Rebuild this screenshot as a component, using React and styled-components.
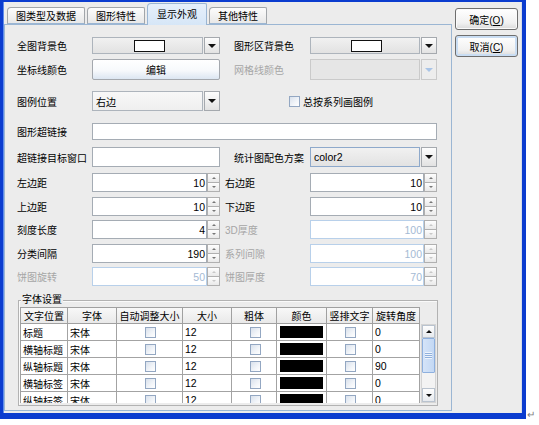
import React from "react";
import styled, { createGlobalStyle } from "styled-components";

const GlobalStyle = createGlobalStyle`
  html, body { margin: 0; padding: 0; background: #fff; }
  body {
    width: 539px; height: 425px; overflow: hidden;
    font-family: "Liberation Sans", "Noto Sans CJK SC", sans-serif;
    font-size: 10px; color: #000;
  }
  * { box-sizing: border-box; }
`;

const Page = styled.div`
  display: flex;
  width: 539px;
  height: 425px;
`;

const Window = styled.div`
  width: 526px;
  height: 419px;
  border-style: solid;
  border-color: #0B3CCF;
  border-width: 2px 4px 6px 3px;
  background: #ECECEC;
  display: flex;
  align-items: flex-start;
  box-shadow: inset 1px 0 0 #5F8CEB, inset -1px 0 0 #D6DCE8;
`;

const Pilcrow = styled.span`
  align-self: flex-end;
  margin: 0 0 5px 1px;
  color: #808080;
  font-size: 10px;
  line-height: 10px;
`;

const TabPane = styled.div`
  width: 448px;
  height: 409px;
  margin-left: 1px;
  display: flex;
  flex-direction: column;
`;

const TabStrip = styled.div`
  height: 22px;
  display: flex;
  align-items: flex-end;
  gap: 2px;
  padding-left: 3px;
  position: relative;
  z-index: 1;
`;

const Tab = styled.div`
  height: ${(p) => (p.$active ? 22 : 17)}px;
  margin-bottom: ${(p) => (p.$active ? -1 : 0)}px;
  padding: 0 ${(p) => (p.$active ? 9 : 8)}px;
  display: flex;
  align-items: center;
  padding-bottom: ${(p) => (p.$active ? 2 : 0)}px;
  border: 1px solid ${(p) => (p.$active ? "#9BB6D3" : "#A2A6AA")};
  border-bottom: ${(p) => (p.$active ? "none" : "1px solid #9BB6D3")};
  border-radius: 4px 2px 0 0;
  background: ${(p) =>
    p.$active
      ? "linear-gradient(#E6F0FB, #D6E6F7)"
      : "linear-gradient(#FCFCFC, #E8E8E8)"};
  white-space: nowrap;
`;

const Panel = styled.div`
  flex: 1;
  border: 1px solid #9BB6D3;
  background: #ECECEC;
  padding: 0 14px 0 12px;
  display: flex;
  flex-direction: column;
`;

const Row = styled.div`
  display: grid;
  grid-template-columns: 75px 128px 90px 127px;
  align-items: stretch;
  height: ${(p) => p.$h}px;
  margin-top: ${(p) => p.$mt}px;
`;

const Label = styled.div`
  display: flex;
  align-items: center;
  padding-left: ${(p) => p.$pad || 0}px;
  color: ${(p) => (p.$disabled ? "#A6A6A6" : "#000")};
  white-space: nowrap;
`;

const Wide = styled.div`
  grid-column: 2 / 5;
  display: flex;
`;

const CheckCell = styled.label`
  grid-column: 3 / 5;
  display: flex;
  align-items: center;
  gap: 3px;
  padding-left: ${(p) => p.$pad}px;
  white-space: nowrap;
`;

/* combo box */
const Combo = styled.div`
  display: flex;
  gap: 1px;
`;

const ComboField = styled.div`
  flex: 1;
  display: flex;
  align-items: center;
  justify-content: ${(p) => (p.$center ? "center" : "flex-start")};
  padding-left: 3px;
  border: 1px solid ${(p) => (p.$disabled ? "#CACACA" : p.$blue ? "#8EA9CB" : "#ADB4BC")};
  background: ${(p) =>
    p.$disabled
      ? "#E6E6E6"
      : p.$light
      ? "linear-gradient(#F8F8F8, #EFEFEF)"
      : "linear-gradient(#F1F1F1, #E2E2E2)"};
  font-size: ${(p) => (p.$latin ? 10.5 : 10)}px;
`;

const Swatch = styled.span`
  width: 31px;
  height: 12px;
  background: #fff;
  border: 1px solid #111;
`;

const ArrowButton = styled.div`
  width: 16px;
  display: flex;
  align-items: center;
  justify-content: center;
  border: 1px solid ${(p) => (p.$disabled ? "#CACACA" : "#A5A9AE")};
  background: ${(p) => (p.$disabled ? "#EDEDED" : "linear-gradient(#FDFDFD, #E2E2E2)")};
  &::after {
    content: "";
    border-left: 4px solid transparent;
    border-right: 4px solid transparent;
    border-top: 4px solid ${(p) => (p.$disabled ? "#A9C4E6" : "#111")};
  }
`;

const EditButton = styled.button`
  font: inherit;
  margin: 0;
  padding: 0;
  border: 1px solid #A4A8AE;
  border-radius: 2px;
  background: linear-gradient(#FFFFFF 0%, #F7F9FC 55%, #DCE6F2 100%);
  color: #000;
`;

const TextField = styled.div`
  flex: 1;
  background: #fff;
  border: 1px solid #A5ACB4;
  display: flex;
  align-items: center;
  padding-left: 3px;
`;

/* spinner */
const Spinner = styled.div`
  display: flex;
`;

const SpinField = styled.div`
  flex: 1;
  background: #fff;
  border: 1px solid ${(p) => (p.$disabled ? "#B8D0EA" : "#A5ACB4")};
  color: ${(p) => (p.$disabled ? "#A4BAD4" : "#000")};
  display: flex;
  align-items: center;
  justify-content: flex-end;
  padding-right: 1px;
  font-size: 10.5px;
`;

const SpinButtons = styled.div`
  width: 13px;
  display: flex;
  flex-direction: column;
`;

const SpinBtn = styled.div`
  flex: 1;
  border: 1px solid #B0B0B0;
  border-top-width: ${(p) => (p.$down ? 0 : 1)}px;
  background: linear-gradient(#FEFEFE, #E9E9E9);
  display: flex;
  align-items: center;
  justify-content: center;
  &::after {
    content: "";
    border-left: 2px solid transparent;
    border-right: 2px solid transparent;
    ${(p) => (p.$down ? "border-top" : "border-bottom")}: 2px solid ${(p) =>
      p.$disabled ? "#C8C8C8" : "#777"};
  }
`;

/* check box */
const Box = styled.span`
  display: inline-block;
  flex: none;
  width: 11px;
  height: 11px;
  border: 1px solid #93A7C2;
  background: linear-gradient(135deg, #D9E1EC 0%, #F2F5F9 60%, #FFFFFF 100%);
`;

/* group */
const Group = styled.div`
  position: relative;
  margin-top: 14px;
  margin-left: 1px;
  width: 420px;
  height: 106px;
  border: 1px solid #B2B2B2;
  padding: 6px 1px 0 1px;
  display: flex;
  align-items: flex-start;
  box-shadow: inset 1px 1px 0 #FAFAFA;
`;

const GroupTitle = styled.span`
  position: absolute;
  top: -7px;
  left: 2px;
  padding: 0 1px;
  line-height: 12px;
  background: #ECECEC;
`;

const Table = styled.div`
  width: 400px;
  border-left: 1px solid #A0A0A0;
`;

const GridRow = styled.div`
  display: grid;
  grid-template-columns: 47px 49px 66px 49px 45px 50px 46px 47px;
  height: 17px;
`;

const HeadCell = styled.div`
  border-top: 1px solid #A0A0A0;
  border-right: 1px solid #A0A0A0;
  border-bottom: 1px solid #A0A0A0;
  background: linear-gradient(#F8F8F8, #E9E9E9);
  display: flex;
  align-items: center;
  justify-content: center;
  white-space: nowrap;
`;

const BodyView = styled.div`
  height: 79px;
  overflow: hidden;
`;

const Cell = styled.div`
  border-right: 1px solid #A3A3A3;
  border-bottom: 1px solid #A3A3A3;
  background: #fff;
  display: flex;
  align-items: center;
  justify-content: ${(p) => (p.$center ? "center" : "flex-start")};
  padding: ${(p) => (p.$fill ? "2px 3px" : "0 0 0 2px")};
  white-space: nowrap;
  font-size: ${(p) => (p.$latin ? 10.5 : 10)}px;
`;

const ColorFill = styled.div`
  width: 100%;
  height: 100%;
  background: #000;
`;

const ScrollColumn = styled.div`
  margin-left: 1px;
  padding-top: 17px;
`;

const ScrollBar = styled.div`
  width: 15px;
  height: 79px;
  background: #F3F3F3;
  border: 1px solid #D4D4D4;
  display: flex;
  flex-direction: column;
`;

const ScrollBtn = styled.div`
  height: ${(p) => p.$h}px;
  background: linear-gradient(#FDFDFD, #E7EAEE);
  border: 1px solid #B9C3CF;
  display: flex;
  align-items: center;
  justify-content: center;
  &::after {
    content: "";
    border-left: 3px solid transparent;
    border-right: 3px solid transparent;
    ${(p) => (p.$down ? "border-top" : "border-bottom")}: 3px solid #111;
  }
`;

const Thumb = styled.div`
  height: 35px;
  background: linear-gradient(90deg, #D5E4F8, #C3D8F4);
  border: 1px solid #8EB0DE;
  border-radius: 1px;
  display: flex;
  align-items: center;
  justify-content: center;
`;

const Grip = styled.div`
  width: 7px;
  height: 7px;
  background: repeating-linear-gradient(#EEF4FC 0 1px, #8FB0DC 1px 2px);
`;

const Spacer = styled.div`
  flex: 1;
`;

const Side = styled.div`
  display: flex;
  flex-direction: column;
  gap: 5px;
  margin-left: 3px;
  padding-top: 6px;
`;

const DialogButton = styled.button`
  width: 63px;
  height: 22px;
  margin: 0;
  padding: 0;
  font: inherit;
  color: #000;
  border: 1px solid #6E6E6E;
  border-radius: 3px;
  background: linear-gradient(#FFFFFF, #F1F1F1 70%, #DADADA);
  box-shadow: ${(p) => (p.$focus ? "inset 0 0 0 2px #C9DDF3" : "inset 0 0 0 1px #FAFAFA")};
`;

const ColorCombo = ({ disabled }) => (
  <Combo>
    <ComboField $center $disabled={disabled}>
      {!disabled && <Swatch />}
    </ComboField>
    <ArrowButton $disabled={disabled} />
  </Combo>
);

const Spin = ({ value, disabled }) => (
  <Spinner>
    <SpinField $disabled={disabled}>{value}</SpinField>
    <SpinButtons>
      <SpinBtn $disabled={disabled} />
      <SpinBtn $down $disabled={disabled} />
    </SpinButtons>
  </Spinner>
);

const headers = ["文字位置", "字体", "自动调整大小", "大小", "粗体", "颜色", "竖排文字", "旋转角度"];
const rows = [
  ["标题", "0"],
  ["横轴标题", "0"],
  ["纵轴标题", "90"],
  ["横轴标签", "0"],
  ["纵轴标签", "0"],
];

const spinRows = [
  { mt: 6, l: "左边距", lv: "10", r: "右边距", rv: "10" },
  { mt: 5, l: "上边距", lv: "10", r: "下边距", rv: "10" },
  { mt: 4, l: "刻度长度", lv: "4", r: "3D厚度", rv: "100", rd: true },
  { mt: 5, l: "分类间隔", lv: "190", r: "系列间隙", rv: "100", rd: true },
  { mt: 4, l: "饼图旋转", lv: "50", ld: true, r: "饼图厚度", rv: "70", rd: true },
];

export default function App() {
  return (
    <>
      <GlobalStyle />
      <Page>
        <Window>
          <TabPane>
            <TabStrip>
              <Tab>图类型及数据</Tab>
              <Tab>图形特性</Tab>
              <Tab $active>显示外观</Tab>
              <Tab>其他特性</Tab>
            </TabStrip>
            <Panel>
              <Row $h={17} $mt={12}>
                <Label>全图背景色</Label>
                <ColorCombo />
                <Label $pad={14}>图形区背景色</Label>
                <ColorCombo />
              </Row>
              <Row $h={21} $mt={5}>
                <Label>坐标线颜色</Label>
                <EditButton>编辑</EditButton>
                <Label $pad={14} $disabled>网格线颜色</Label>
                <ColorCombo disabled />
              </Row>
              <Row $h={20} $mt={11}>
                <Label>图例位置</Label>
                <Combo>
                  <ComboField $light>右边</ComboField>
                  <ArrowButton />
                </Combo>
                <CheckCell $pad={69}>
                  <Box />
                  总按系列画图例
                </CheckCell>
              </Row>
              <Row $h={17} $mt={12}>
                <Label>图形超链接</Label>
                <Wide>
                  <TextField />
                </Wide>
              </Row>
              <Row $h={20} $mt={7}>
                <Label>超链接目标窗口</Label>
                <TextField />
                <Label $pad={14}>统计图配色方案</Label>
                <Combo>
                  <ComboField $blue $latin>color2</ComboField>
                  <ArrowButton />
                </Combo>
              </Row>
              {spinRows.map((r) => (
                <Row key={r.l} $h={19} $mt={r.mt}>
                  <Label $disabled={r.ld}>{r.l}</Label>
                  <Spin value={r.lv} disabled={r.ld} />
                  <Label $pad={5} $disabled={r.rd}>{r.r}</Label>
                  <Spin value={r.rv} disabled={r.rd} />
                </Row>
              ))}
              <Group>
                <GroupTitle>字体设置</GroupTitle>
                <Table>
                  <GridRow>
                    {headers.map((h) => (
                      <HeadCell key={h}>{h}</HeadCell>
                    ))}
                  </GridRow>
                  <BodyView>
                    {rows.map(([name, angle]) => (
                      <GridRow key={name}>
                        <Cell>{name}</Cell>
                        <Cell>宋体</Cell>
                        <Cell $center><Box /></Cell>
                        <Cell $latin>12</Cell>
                        <Cell $center><Box /></Cell>
                        <Cell $fill><ColorFill /></Cell>
                        <Cell $center><Box /></Cell>
                        <Cell $latin>{angle}</Cell>
                      </GridRow>
                    ))}
                  </BodyView>
                </Table>
                <ScrollColumn>
                  <ScrollBar>
                    <ScrollBtn $h={13} />
                    <Thumb>
                      <Grip />
                    </Thumb>
                    <Spacer />
                    <ScrollBtn $h={14} $down />
                  </ScrollBar>
                </ScrollColumn>
              </Group>
            </Panel>
          </TabPane>
          <Side>
            <DialogButton>
              确定(<u>O</u>)
            </DialogButton>
            <DialogButton $focus>
              取消(<u>C</u>)
            </DialogButton>
          </Side>
        </Window>
        <Pilcrow>↵</Pilcrow>
      </Page>
    </>
  );
}
